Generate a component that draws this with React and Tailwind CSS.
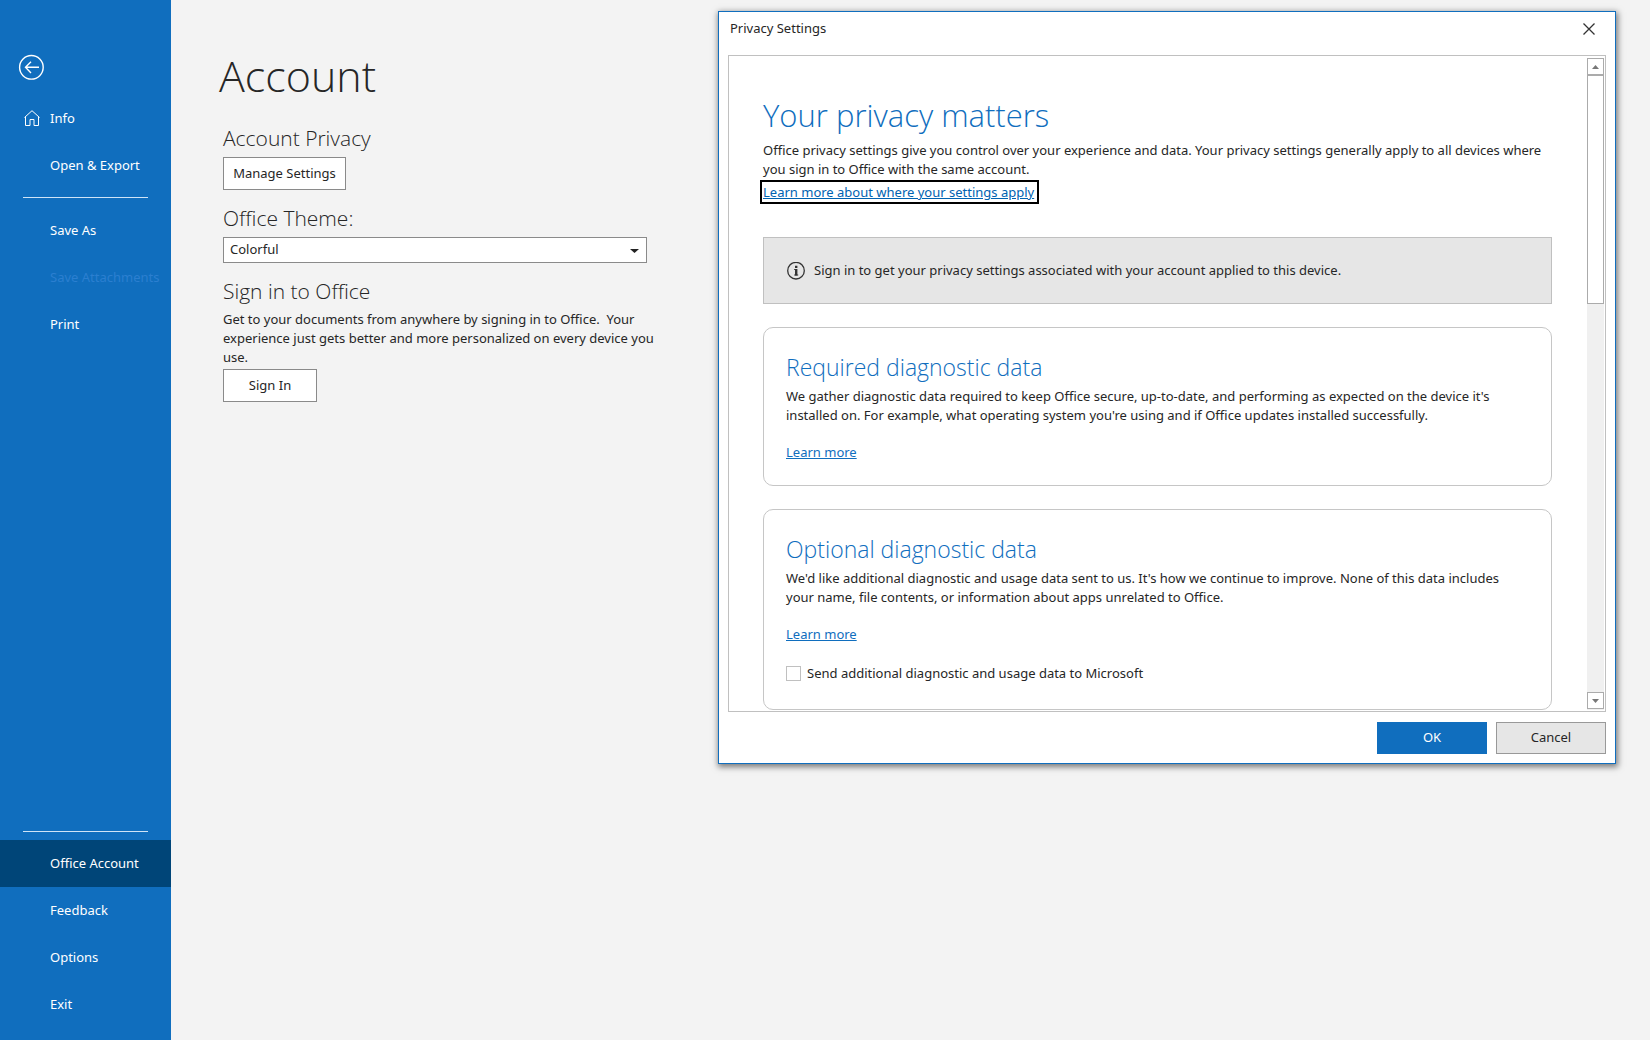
import { useState } from "react";
import clsx from "clsx";

const topLinks = [
  { label: "Info", icon: true },
  { label: "Open & Export" },
];

const fileLinks = [
  { label: "Save As" },
  { label: "Save Attachments", disabled: true },
  { label: "Print" },
];

const bottomLinks = [
  { label: "Office Account", active: true },
  { label: "Feedback" },
  { label: "Options" },
  { label: "Exit" },
];

const HomeIcon = () => (
  <svg width="16" height="17" viewBox="0 0 16 17" fill="none" stroke="currentColor" strokeWidth="1" aria-hidden="true">
    <path d="M0.5 7.5 8 0.7l7.5 6.800" />
    <path d="M1.500 6.600v8.900h4.500V9.500h4v6h4.500V6.600" />
  </svg>
);

const NavItem = ({ item }) => (
  <li>
    <button
      disabled={item.disabled}
      className={clsx(
        "flex h-[47px] w-full items-center whitespace-nowrap text-left",
        item.active && "bg-[#004578]",
        item.disabled ? "text-[#2b7fd0]" : "text-white"
      )}
    >
      <span className="flex w-[50px] shrink-0 justify-end pr-[10px]">
        {item.icon && <HomeIcon />}
      </span>
      {item.label}
    </button>
  </li>
);

const Sidebar = () => (
  <nav className="flex w-[171px] shrink-0 flex-col bg-[#106ebe] pb-3 pt-[54px]">
    <button aria-label="Back" className="ml-[18px] h-[26px] w-[26px] text-white">
      <svg width="26" height="26" viewBox="0 0 26 26" fill="none" stroke="currentColor" strokeWidth="1.4">
        <circle cx="13.400" cy="13.300" r="11.8" />
        <path d="M21 13.300H7.500M13 7.700 7.500 13.300l5.500 5.600" />
      </svg>
    </button>
    <ul className="mt-[15px]">
      {topLinks.map((item) => <NavItem key={item.label} item={item} />)}
    </ul>
    <hr className="mx-[23px] mb-[9px] mt-2 border-[#cfe4f7]" />
    <ul>
      {fileLinks.map((item) => <NavItem key={item.label} item={item} />)}
    </ul>
    <hr className="mx-[23px] mb-2 mt-auto border-[#cfe4f7]" />
    <ul>
      {bottomLinks.map((item) => <NavItem key={item.label} item={item} />)}
    </ul>
  </nav>
);

const AccountPanel = () => (
  <section className="w-[547px] shrink-0 pl-[52px] pt-11">
    <h1 className="-ml-1 font-['Open_Sans',sans-serif] text-[43px] font-light leading-[64px]">Account</h1>
    <h2 className="mt-4 font-['Open_Sans',sans-serif] text-[21px] font-light leading-7">Account Privacy</h2>
    <button className="mt-[5px] h-[33px] w-[123px] border border-[#8a8a8a] bg-white">Manage Settings</button>

    <h2 className="mt-[14px] font-['Open_Sans',sans-serif] text-[21px] font-light leading-7">
      <label htmlFor="theme">Office Theme:</label>
    </h2>
    <div className="relative mt-[5px] w-[424px]">
      <select id="theme" className="block h-[26px] w-full appearance-none border border-[#8a8a8a] bg-white pl-[6px]">
        <option>Colorful</option>
        <option>Dark Gray</option>
        <option>Black</option>
        <option>White</option>
      </select>
      <svg className="pointer-events-none absolute right-2 top-3" width="9" height="4" viewBox="0 0 9 4" aria-hidden="true">
        <path d="M0 0h9L4.500 4z" fill="#222" />
      </svg>
    </div>

    <h2 className="mt-[14px] font-['Open_Sans',sans-serif] text-[21px] font-light leading-7">Sign in to Office</h2>
    <p className="mt-[5px] w-[440px] whitespace-pre-wrap leading-[19px]">
      {"Get to your documents from anywhere by signing in to Office.  Your experience just gets better and more personalized on every device you use."}
    </p>
    <button className="mt-[2px] h-[33px] w-[94px] border border-[#8a8a8a] bg-white">Sign In</button>
  </section>
);

const Scrollbar = () => (
  <div className="flex w-[17px] flex-col bg-[#f0f0f0]">
    <button aria-label="Scroll up" className="flex h-[17px] items-center justify-center border border-[#ababab] bg-white">
      <svg width="7" height="4" viewBox="0 0 7 4"><path d="M3.500 0 7 4H0z" fill="#777" /></svg>
    </button>
    <div className="h-[229px] border border-[#ababab] bg-white" />
    <button aria-label="Scroll down" className="mb-px mt-auto flex h-[17px] items-center justify-center border border-[#ababab] bg-white">
      <svg width="7" height="4" viewBox="0 0 7 4"><path d="M0 0h7L3.500 4z" fill="#777" /></svg>
    </button>
  </div>
);

const DataCard = ({ title, text, children }) => (
  <article className="mt-[23px] rounded-[10px] border border-[#c6c6c6] pb-[23px] pl-[22px] pr-10 pt-[23px]">
    <h3 className="font-['Open_Sans',sans-serif] text-[23px] font-light leading-8 text-[#106ebe]">{title}</h3>
    <p className="mt-1 leading-[19px]">{text}</p>
    <a href="#learn" className="mt-[18px] block w-fit leading-[19px] text-[#106ebe] underline">Learn more</a>
    {children}
  </article>
);

const PrivacyDialog = () => {
  const [sendData, setSendData] = useState(false);

  return (
    <div role="dialog" aria-labelledby="dialog-title" className="min-w-0 flex-1 self-start border border-[#106ebe] bg-white px-[9px] pb-[9px] shadow-[1px_2px_6px_1px_rgba(0,0,0,0.5)]">
      <div className="flex h-[43px] items-center justify-between pb-[9px] pl-[2px] pr-[10px]">
        <h2 id="dialog-title">Privacy Settings</h2>
        <button aria-label="Close" className="p-px">
          <svg width="12" height="12" viewBox="0 0 12 12" stroke="#333" strokeWidth="1.300"><path d="M0.500 0.500l11 11M11.500 0.500l-11 11" /></svg>
        </button>
      </div>

      <div className="flex border border-[#c0c0c0] p-[1px] pt-[2px]">
        <div className="min-w-0 flex-1 pl-[33px] pr-[35px] pt-[34px]">
          <h3 className="font-['Open_Sans',sans-serif] text-[31px] font-light leading-[46px] text-[#106ebe]">Your privacy matters</h3>
          <p className="mt-[3px] leading-[19px]">
            Office privacy settings give you control over your experience and data. Your privacy settings generally apply to all devices where you sign in to Office with the same account.
          </p>
          <a href="#apply" className="-ml-[3px] mt-px block w-fit border-2 border-black pl-px pr-[3px] leading-5 text-[#0063b1] underline">
            Learn more about where your settings apply
          </a>

          <div className="mt-[33px] flex h-[67px] items-center gap-[9px] border border-[#c0c0c0] bg-[#e6e6e6] pl-[23px]">
            <svg width="18" height="18" viewBox="0 0 18 18" fill="none" stroke="#333" aria-hidden="true">
              <circle cx="9" cy="8.700" r="8.300" strokeWidth="1.300" />
              <path d="M9.200 7v6.500M9.200 3.700v2.300" strokeWidth="2.400" />
              <path d="M7.200 7.500H9M7.200 13h4" strokeWidth="1" />
            </svg>
            <span>Sign in to get your privacy settings associated with your account applied to this device.</span>
          </div>

          <DataCard
            title="Required diagnostic data"
            text="We gather diagnostic data required to keep Office secure, up-to-date, and performing as expected on the device it's installed on. For example, what operating system you're using and if Office updates installed successfully."
          />
          <DataCard
            title="Optional diagnostic data"
            text="We'd like additional diagnostic and usage data sent to us. It's how we continue to improve. None of this data includes your name, file contents, or information about apps unrelated to Office."
          >
            <label className="mt-5 flex items-center gap-[6px] pb-[3px] leading-[19px]">
              <input
                type="checkbox"
                checked={sendData}
                onChange={(e) => setSendData(e.target.checked)}
                className="h-[15px] w-[15px] appearance-none border border-[#c0c0c0] bg-white checked:bg-[#106ebe]"
              />
              Send additional diagnostic and usage data to Microsoft
            </label>
          </DataCard>
        </div>
        <Scrollbar />
      </div>

      <div className="mt-[10px] flex justify-end gap-[9px]">
        <button className="h-8 w-[110px] bg-[#106ebe] text-white">OK</button>
        <button className="h-8 w-[110px] border border-[#999] bg-[#e6e6e6]">Cancel</button>
      </div>
    </div>
  );
};

export default function App() {
  return (
    <div className="flex min-h-screen bg-[#f3f3f3] font-['Noto_Sans',sans-serif] text-[13px] text-[#262626]">
      <Sidebar />
      <main className="flex min-w-0 flex-1">
        <AccountPanel />
        <div className="flex min-w-0 flex-1 pr-[34px] pt-[11px]">
          <PrivacyDialog />
        </div>
      </main>
    </div>
  );
}
